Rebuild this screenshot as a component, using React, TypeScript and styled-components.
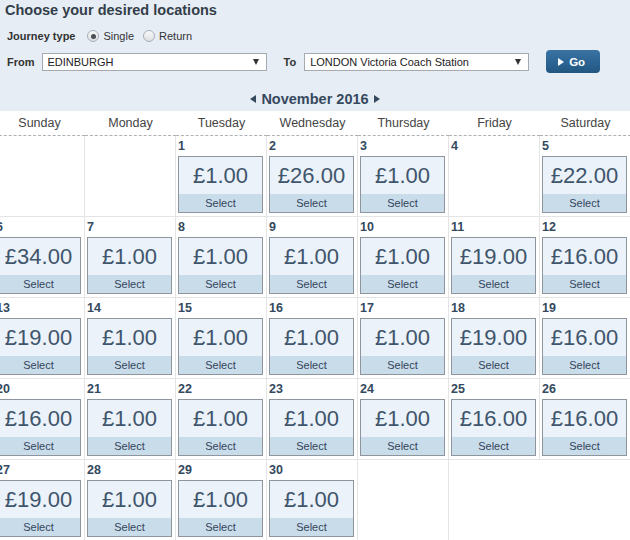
import React from "react";
import styled, { createGlobalStyle } from "styled-components";

const Global = createGlobalStyle`
  html, body { margin: 0; padding: 0; background: #fff; overflow: hidden; }
  body { font-family: Arial, "Liberation Sans", sans-serif; }
`;

const Page = styled.div`
  width: 630px;
  height: 540px;
  overflow: hidden;
`;

const Header = styled.div`
  background: #e6edf5;
  height: 111px;
  padding: 0 0 0 5px;
  box-sizing: border-box;
`;

const Title = styled.h1`
  margin: 0;
  font-size: 14.5px;
  line-height: 20px;
  font-weight: bold;
  color: #333e49;
`;

const JourneyRow = styled.div`
  display: flex;
  align-items: center;
  height: 18px;
  margin-top: 7px;
  padding-left: 2px;
  font-size: 11px;
  color: #333;
`;

const Label = styled.span<{ $gap: number }>`
  font-weight: bold;
  font-size: 11px;
  color: #333;
  margin-right: ${(p) => p.$gap}px;
`;

const RadioOption = styled.label`
  display: flex;
  align-items: center;
  margin-right: 9px;
  font-size: 11px;
  color: #333;
`;

const RadioCircle = styled.span<{ $checked?: boolean }>`
  width: 12px;
  height: 12px;
  box-sizing: border-box;
  border-radius: 50%;
  border: 1px solid #a8aeb5;
  background: linear-gradient(#fafafa, #dcdfe2);
  margin-right: 4px;
  display: flex;
  align-items: center;
  justify-content: center;
  &::after {
    content: "";
    display: ${(p) => (p.$checked ? "block" : "none")};
    width: 5px;
    height: 5px;
    border-radius: 50%;
    background: #4a4f55;
  }
`;

const SelectRow = styled.div`
  display: flex;
  align-items: center;
  height: 23px;
  margin-top: 5px;
  padding-left: 2px;
`;

const SelectBox = styled.div`
  width: 225px;
  height: 18px;
  box-sizing: border-box;
  background: #fff;
  border: 1px solid #a6a9ad;
  display: flex;
  align-items: center;
  justify-content: space-between;
  padding: 0 7px 0 5px;
  font-size: 11px;
  color: #222;
  margin-right: 17px;
`;

const Arrow = styled.span`
  width: 0;
  height: 0;
  border-left: 3px solid transparent;
  border-right: 3px solid transparent;
  border-top: 6px solid #333;
`;

const GoButton = styled.button`
  width: 54px;
  height: 23px;
  box-sizing: border-box;
  border: none;
  border-radius: 4px;
  background: linear-gradient(#3a74a3, #2a6292 60%, #22567f);
  color: #fff;
  font-family: Arial, "Liberation Sans", sans-serif;
  font-weight: bold;
  font-size: 11.5px;
  display: flex;
  align-items: center;
  justify-content: center;
  gap: 5px;
  padding: 0;
  padding-right: 3px;
`;

const MonthNav = styled.div`
  display: flex;
  align-items: center;
  justify-content: center;
  gap: 5px;
  height: 20px;
  margin-top: 16px;
  margin-left: -5px;
  font-size: 14.5px;
  font-weight: bold;
  color: #36495d;
`;

const Calendar = styled.div`
  display: grid;
  grid-template-columns: repeat(7, 91px);
  margin-left: -6px;
  width: 637px;
`;

const DayName = styled.div`
  height: 24px;
  line-height: 24px;
  text-align: center;
  font-size: 12.5px;
  color: #444;
  border-bottom: 1px dashed #aeb2b6;
`;

const Cell = styled.div<{ $noRight?: boolean; $span?: number }>`
  height: 81px;
  box-sizing: border-box;
  padding: 0 3px 0 2px;
  border-right: 1px solid ${(p) => (p.$noRight ? "transparent" : "#e4e4e4")};
  border-bottom: 1px solid #e4e4e4;
  grid-column: span ${(p) => p.$span || 1};
`;

const DayNum = styled.div`
  height: 20px;
  line-height: 20px;
  font-size: 12.5px;
  font-weight: bold;
  color: #34495e;
`;

const PriceBox = styled.div`
  width: 85px;
  height: 57px;
  box-sizing: border-box;
  border: 1px solid #8e959c;
  display: flex;
  flex-direction: column;
`;

const Price = styled.div`
  height: 37px;
  line-height: 37px;
  background: #ebf2f9;
  text-align: center;
  font-size: 22px;
  color: #3f556c;
`;

const SelectBand = styled.div`
  height: 18px;
  line-height: 18px;
  background: #c9dcea;
  text-align: center;
  font-size: 11px;
  color: #33445a;
`;

const Tri = ({ dir }: { dir: "l" | "r" }) => (
  <svg width="6" height="8" viewBox="0 0 6 8">
    <path d={dir === "l" ? "M6 0 L0 4 L6 8 Z" : "M0 0 L6 4 L0 8 Z"} fill="#36495d" />
  </svg>
);

const days = ["Sunday", "Monday", "Tuesday", "Wednesday", "Thursday", "Friday", "Saturday"];

const prices: Record<number, string> = {
  1: "1.00", 2: "26.00", 3: "1.00", 5: "22.00",
  6: "34.00", 7: "1.00", 8: "1.00", 9: "1.00", 10: "1.00", 11: "19.00", 12: "16.00",
  13: "19.00", 14: "1.00", 15: "1.00", 16: "1.00", 17: "1.00", 18: "19.00", 19: "16.00",
  20: "16.00", 21: "1.00", 22: "1.00", 23: "1.00", 24: "1.00", 25: "16.00", 26: "16.00",
  27: "19.00", 28: "1.00", 29: "1.00", 30: "1.00",
};

export default function App() {
  const cells: React.ReactNode[] = [];
  cells.push(<Cell key="e0" />, <Cell key="e1" />);
  for (let d = 1; d <= 30; d++) {
    cells.push(
      <Cell key={d}>
        <DayNum>{d}</DayNum>
        {prices[d] && (
          <PriceBox>
            <Price>£{prices[d]}</Price>
            <SelectBand>Select</SelectBand>
          </PriceBox>
        )}
      </Cell>
    );
  }
  cells.push(<Cell key="t0" />, <Cell key="t1" $span={2} $noRight />);

  return (
    <Page>
      <Global />
      <Header>
        <Title>Choose your desired locations</Title>
        <JourneyRow>
          <Label $gap={12}>Journey type</Label>
          <RadioOption>
            <RadioCircle $checked />
            Single
          </RadioOption>
          <RadioOption>
            <RadioCircle />
            Return
          </RadioOption>
        </JourneyRow>
        <SelectRow>
          <Label $gap={7}>From</Label>
          <SelectBox>
            <span>EDINBURGH</span>
            <Arrow />
          </SelectBox>
          <Label $gap={8}>To</Label>
          <SelectBox>
            <span>LONDON Victoria Coach Station</span>
            <Arrow />
          </SelectBox>
          <GoButton>
            <svg width="6" height="8" viewBox="0 0 6 8">
              <path d="M0 0 L6 4 L0 8 Z" fill="#fff" />
            </svg>
            Go
          </GoButton>
        </SelectRow>
        <MonthNav>
          <Tri dir="l" />
          <span>November 2016</span>
          <Tri dir="r" />
        </MonthNav>
      </Header>
      <Calendar>
        {days.map((d) => (
          <DayName key={d}>{d}</DayName>
        ))}
        {cells}
      </Calendar>
    </Page>
  );
}
